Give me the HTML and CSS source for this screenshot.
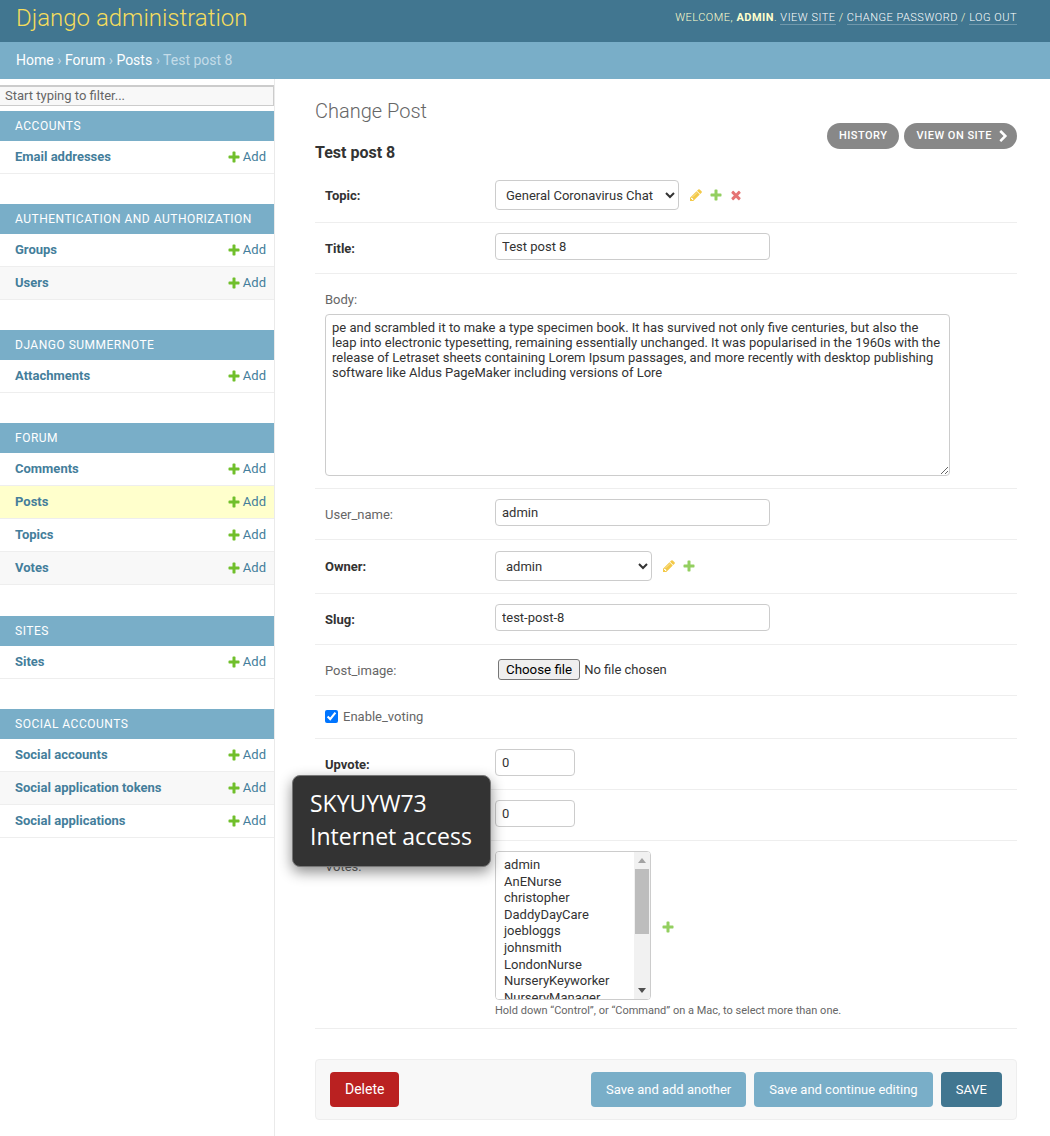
FILE: index.html
```html
<!DOCTYPE html>
<html lang="en">
<head>
<meta charset="utf-8">
<title>Change Post | Django site admin</title>
<link rel="stylesheet" href="styles.css">
</head>
<body>
<svg class="sprite" aria-hidden="true">
  <symbol id="i-add" viewBox="0 0 1792 1792"><path d="M1600 796v192q0 40-28 68t-68 28h-416v416q0 40-28 68t-68 28h-192q-40 0-68-28t-28-68v-416h-416q-40 0-68-28t-28-68v-192q0-40 28-68t68-28h416v-416q0-40 28-68t68-28h192q40 0 68 28t28 68v416h416q40 0 68 28t28 68z"/></symbol>
  <symbol id="i-change" viewBox="0 0 1792 1792"><path d="M491 1536l91-91-235-235-91 91v107h128v128h107zm523-928q0-22-22-22-10 0-17 7l-542 542q-7 7-7 17 0 22 22 22 10 0 17-7l542-542q7-7 7-17zm-54-192l416 416-832 832h-416v-416zm683 96q0 53-37 90l-166 166-416-416 166-165q36-38 90-38 53 0 91 38l235 234q37 39 37 91z"/></symbol>
  <symbol id="i-del" viewBox="0 0 1792 1792"><path d="M1490 1322q0 40-28 68l-136 136q-28 28-68 28t-68-28l-294-294-294 294q-28 28-68 28t-68-28l-136-136q-28-28-28-68t28-68l294-294-294-294q-28-28-28-68t28-68l136-136q28-28 68-28t68 28l294 294 294-294q28-28 68-28t68 28l136 136q28 28 28 68t-28 68l-294 294 294 294q28 28 28 68z"/></symbol>
  <symbol id="i-arrow" viewBox="0 0 1792 1792"><path d="M1363 877l-742 742q-19 19-45 19t-45-19l-166-166q-19-19-19-45t19-45l531-531-531-531q-19-19-19-45t19-45l166-166q19-19 45-19t45 19l742 742q19 19 19 45t-19 45z"/></symbol>
</svg>

<header class="header">
  <div class="brand">Django administration</div>
  <div class="user-tools">Welcome, <strong>admin</strong>. <a href="#">View site</a> / <a href="#">Change password</a> / <a href="#">Log out</a></div>
</header>
<nav class="breadcrumbs"><a href="#">Home</a> <span class="sep">›</span> <a href="#">Forum</a> <span class="sep">›</span> <a href="#">Posts</a> <span class="sep">›</span> Test post 8</nav>

<div class="layout">
  <aside class="sidebar">
    <input class="nav-filter" type="text" placeholder="Start typing to filter...">
    <section class="module">
      <h2 class="caption">Accounts</h2>
      <div class="mrow"><a class="mname" href="#">Email addresses</a><a class="madd" href="#"><svg class="ic ic-add"><use href="#i-add"/></svg>Add</a></div>
    </section>
    <section class="module">
      <h2 class="caption">Authentication and Authorization</h2>
      <div class="mrow"><a class="mname" href="#">Groups</a><a class="madd" href="#"><svg class="ic ic-add"><use href="#i-add"/></svg>Add</a></div>
      <div class="mrow"><a class="mname" href="#">Users</a><a class="madd" href="#"><svg class="ic ic-add"><use href="#i-add"/></svg>Add</a></div>
    </section>
    <section class="module">
      <h2 class="caption">Django Summernote</h2>
      <div class="mrow"><a class="mname" href="#">Attachments</a><a class="madd" href="#"><svg class="ic ic-add"><use href="#i-add"/></svg>Add</a></div>
    </section>
    <section class="module module-tall">
      <h2 class="caption">Forum</h2>
      <div class="mrow"><a class="mname" href="#">Comments</a><a class="madd" href="#"><svg class="ic ic-add"><use href="#i-add"/></svg>Add</a></div>
      <div class="mrow current"><a class="mname" href="#">Posts</a><a class="madd" href="#"><svg class="ic ic-add"><use href="#i-add"/></svg>Add</a></div>
      <div class="mrow"><a class="mname" href="#">Topics</a><a class="madd" href="#"><svg class="ic ic-add"><use href="#i-add"/></svg>Add</a></div>
      <div class="mrow"><a class="mname" href="#">Votes</a><a class="madd" href="#"><svg class="ic ic-add"><use href="#i-add"/></svg>Add</a></div>
    </section>
    <section class="module">
      <h2 class="caption">Sites</h2>
      <div class="mrow"><a class="mname" href="#">Sites</a><a class="madd" href="#"><svg class="ic ic-add"><use href="#i-add"/></svg>Add</a></div>
    </section>
    <section class="module">
      <h2 class="caption">Social Accounts</h2>
      <div class="mrow"><a class="mname" href="#">Social accounts</a><a class="madd" href="#"><svg class="ic ic-add"><use href="#i-add"/></svg>Add</a></div>
      <div class="mrow"><a class="mname" href="#">Social application tokens</a><a class="madd" href="#"><svg class="ic ic-add"><use href="#i-add"/></svg>Add</a></div>
      <div class="mrow"><a class="mname" href="#">Social applications</a><a class="madd" href="#"><svg class="ic ic-add"><use href="#i-add"/></svg>Add</a></div>
    </section>
  </aside>

  <main class="content">
    <div class="content-head">
      <div>
        <h1 class="page-title">Change Post</h1>
        <h2 class="object-title">Test post 8</h2>
      </div>
      <div class="object-tools">
        <a class="tool" href="#">History</a>
        <a class="tool" href="#">View on site<svg class="tool-arrow"><use href="#i-arrow"/></svg></a>
      </div>
    </div>

    <form class="change-form">
      <div class="form-row row-topic">
        <label class="lbl req">Topic:</label>
        <select class="sel sel-topic"><option>General Coronavirus Chat</option></select>
        <a class="rel first" href="#"><svg class="ic-rel ic-change"><use href="#i-change"/></svg></a>
        <a class="rel" href="#"><svg class="ic-rel ic-add"><use href="#i-add"/></svg></a>
        <a class="rel" href="#"><svg class="ic-rel ic-del"><use href="#i-del"/></svg></a>
      </div>
      <div class="form-row">
        <label class="lbl req">Title:</label>
        <input class="txt" type="text" value="Test post 8">
      </div>
      <div class="form-row row-body">
        <label class="lbl lbl-stack">Body:</label>
        <textarea class="area">pe and scrambled it to make a type specimen book. It has survived not only five centuries, but also the leap into electronic typesetting, remaining essentially unchanged. It was popularised in the 1960s with the release of Letraset sheets containing Lorem Ipsum passages, and more recently with desktop publishing software like Aldus PageMaker including versions of Lore</textarea>
      </div>
      <div class="form-row">
        <label class="lbl">User_name:</label>
        <input class="txt" type="text" value="admin">
      </div>
      <div class="form-row row-owner">
        <label class="lbl req">Owner:</label>
        <select class="sel sel-owner"><option>admin</option></select>
        <a class="rel first" href="#"><svg class="ic-rel ic-change"><use href="#i-change"/></svg></a>
        <a class="rel" href="#"><svg class="ic-rel ic-add"><use href="#i-add"/></svg></a>
      </div>
      <div class="form-row">
        <label class="lbl req">Slug:</label>
        <input class="txt" type="text" value="test-post-8">
      </div>
      <div class="form-row">
        <label class="lbl">Post_image:</label>
        <div class="file-field"><button class="file-btn" type="button">Choose file</button><span class="file-name">No file chosen</span></div>
      </div>
      <div class="form-row row-check">
        <input class="chk" type="checkbox" checked>
        <label class="lbl-check">Enable_voting</label>
      </div>
      <div class="form-row">
        <label class="lbl req">Upvote:</label>
        <input class="txt num" type="text" value="0">
      </div>
      <div class="form-row">
        <label class="lbl req">Downvote:</label>
        <input class="txt num" type="text" value="0">
      </div>
      <div class="form-row row-votes">
        <label class="lbl">Votes:</label>
        <div class="votes-field">
          <div class="votes-line">
            <div class="multi-wrap">
              <select class="multi" multiple>
                <option>admin</option>
                <option>AnENurse</option>
                <option>christopher</option>
                <option>DaddyDayCare</option>
                <option>joebloggs</option>
                <option>johnsmith</option>
                <option>LondonNurse</option>
                <option>NurseryKeyworker</option>
                <option>NurseryManager</option>
                <option>NurseryNurse</option>
                <option>Parent</option>
                <option>Teacher</option>
                <option>TestUser</option>
                <option>TestUser2</option>
                <option>TestUser3</option>
              </select>
              <div class="scrollbar" aria-hidden="true">
                <span class="sb-btn"><span class="sb-up"></span></span>
                <span class="sb-thumb"></span>
                <span class="sb-spacer"></span>
                <span class="sb-btn"><span class="sb-down"></span></span>
              </div>
            </div>
            <a class="rel first rel-votes" href="#"><svg class="ic-rel ic-add"><use href="#i-add"/></svg></a>
          </div>
          <p class="help">Hold down “Control”, or “Command” on a Mac, to select more than one.</p>
        </div>
      </div>

      <div class="submit-row">
        <a class="btn btn-del" href="#">Delete</a>
        <div class="submit-right">
          <a class="btn btn-sec" href="#">Save and add another</a>
          <a class="btn btn-sec" href="#">Save and continue editing</a>
          <a class="btn btn-save" href="#">SAVE</a>
        </div>
      </div>
    </form>
  </main>
</div>

<div class="net-tooltip">SKYUYW73<br>Internet access</div>
</body>
</html>
```

FILE: styles.css
```css
* { box-sizing: border-box; }
html, body { margin: 0; padding: 0; }
body {
  font-family: Roboto, "Liberation Sans", sans-serif;
  font-size: 14px;
  color: #333;
  background: #fff;
  height: 1136px;
  overflow: hidden;
  position: relative;
}
a { text-decoration: none; }
.sprite { display: none; }

.header {
  height: 42px;
  background: #417690;
  display: flex;
  justify-content: space-between;
  align-items: center;
  padding: 0 33px 0 16px;
}
.brand {
  font-size: 24px;
  font-weight: 300;
  color: #f5dd5d;
  position: relative;
  top: -3px;
}
.user-tools {
  font-size: 11px;
  font-weight: 300;
  letter-spacing: 0.5px;
  text-transform: uppercase;
  color: #ffc;
  position: relative;
  top: -4px;
}
.user-tools strong { font-weight: 700; }
.user-tools a { color: #fff; border-bottom: 1px solid rgba(255,255,255,0.25); }

.breadcrumbs {
  height: 37px;
  background: #79aec8;
  color: #c4dce8;
  font-size: 14px;
  padding: 10px 16px;
  line-height: 17px;
}
.breadcrumbs a { color: #fff; }

.layout { display: flex; height: 1057px; }

.sidebar {
  width: 275px;
  flex: none;
  border-right: 1px solid #eaeaea;
  padding-top: 6px;
}
.nav-filter {
  display: block;
  width: 100%;
  height: 21px;
  margin: 0 0 5px;
  padding: 1px 5px 3px;
  font: 13px Roboto, sans-serif;
  color: #333;
  background: #f8f8f8;
  border-style: solid;
  border-color: #ccc;
  border-width: 2px 1px 1px 0;
}
.nav-filter::placeholder { color: #666; opacity: 1; }

.module { margin-bottom: 30px; }
.module-tall { margin-bottom: 31px; }
.caption {
  margin: 0;
  height: 30px;
  line-height: 30px;
  padding: 0 15px;
  background: #79aec8;
  color: #fff;
  font-size: 12px;
  font-weight: 400;
  letter-spacing: 0.5px;
  text-transform: uppercase;
}
.mrow {
  height: 33px;
  display: flex;
  justify-content: space-between;
  align-items: center;
  padding: 0 8px 1px 15px;
  border-bottom: 1px solid #eee;
  font-size: 13px;
}
.mrow:nth-child(odd) { background: #f8f8f8; }
.mrow.current { background: #ffc; }
.mname { color: #447e9b; font-weight: 700; }
.madd { color: #447e9b; display: flex; align-items: center; }
.ic { width: 14px; height: 14px; margin-right: 2px; }
.ic-add { fill: #70bf2b; }
.ic-change { fill: #efb80b; }
.ic-del { fill: #dd4646; }

.content { flex: 1; min-width: 0; padding: 20px 33px 0 40px; }
.content-head {
  height: 71px;
  display: flex;
  justify-content: space-between;
  align-items: flex-start;
}
.page-title {
  margin: 0;
  font-size: 20px;
  line-height: 24px;
  font-weight: 300;
  color: #666;
}
.object-title {
  margin: 20px 0 0;
  font-size: 16px;
  line-height: 20px;
  font-weight: 700;
  color: #333;
}
.object-tools { display: flex; gap: 5px; margin-top: 24px; }
.tool {
  display: flex;
  align-items: center;
  height: 26px;
  padding: 0 12px 1px;
  border-radius: 15px;
  background: #888;
  color: #fff;
  font-size: 11px;
  font-weight: 500;
  letter-spacing: 0.5px;
  text-transform: uppercase;
}
.tool-arrow { width: 13px; height: 13px; fill: #fff; margin: 1px -5px 0 5px; }

.form-row {
  display: flex;
  align-items: flex-start;
  padding: 10px;
  border-bottom: 1px solid #eee;
  min-height: 51px;
  font-size: 13px;
}
.lbl {
  width: 170px;
  flex: none;
  color: #666;
  line-height: 17px;
  padding-top: 7px;
}
.lbl.req { color: #333; font-weight: 700; }
.txt, .area, .sel, .multi {
  font: 13px Roboto, sans-serif;
  color: #333;
  background: #fff;
  border: 1px solid #ccc;
  border-radius: 4px;
}
.txt { width: 275px; height: 27px; padding: 5px 6px; }
.txt.num { width: 80px; }
.sel { height: 30px; padding: 0 6px; }
.sel-topic { width: 184px; }
.sel-owner { width: 157px; }
.row-topic { min-height: 53px; }
.row-owner { min-height: 54px; padding-top: 11px; }
.rel { display: inline-flex; align-items: center; height: 30px; margin-left: 6px; }
.rel.first { margin-left: 9.5px; }
.rel-votes { margin-top: 3px; }
.ic-rel { width: 14px; height: 14px; opacity: 0.75; }
.row-body { display: block; min-height: 215px; padding-top: 17px; }
.lbl-stack { display: block; padding: 0; margin-bottom: 6px; }
.area {
  display: block;
  width: 625px;
  height: 162px;
  padding: 5px 6px;
  line-height: 15px;
  resize: vertical;
  overflow: hidden;
}
.file-field { display: flex; align-items: center; gap: 4px; padding: 4px 3px; height: 29px; }
.file-btn {
  height: 21px;
  padding: 0 7px;
  font: 13.33px Roboto, sans-serif;
  color: #000;
  background: #efefef;
  border: 1px solid #767676;
  border-radius: 3px;
}
.file-name { font-size: 13px; color: #333; }
.row-check { min-height: 43px; align-items: center; padding-top: 9px; padding-bottom: 11px; }
.chk { width: 13px; height: 13px; margin: 0 5px 0 0; }
.lbl-check { color: #666; line-height: 17px; }
.votes-field { display: block; }
.votes-line { display: flex; align-items: center; }
.multi-wrap { position: relative; width: 156px; height: 149px; }
.multi {
  display: block;
  width: 156px;
  height: 149px;
  padding: 5px 6px;
}
.multi option { min-height: 16.6px; line-height: 16.6px; padding: 0 2px; }
.scrollbar {
  position: absolute;
  top: 1px;
  right: 1px;
  bottom: 1px;
  width: 16px;
  background: #f1f1f1;
  display: flex;
  flex-direction: column;
  border-radius: 0 3px 3px 0;
}
.sb-btn { height: 17px; flex: none; display: flex; align-items: center; justify-content: center; }
.sb-up, .sb-down { width: 0; height: 0; border-left: 4px solid transparent; border-right: 4px solid transparent; }
.sb-up { border-bottom: 5px solid #a3a3a3; }
.sb-down { border-top: 5px solid #505050; }
.sb-thumb { height: 65px; flex: none; margin: 0 1px; background: #bdbdbd; }
.sb-spacer { flex: 1; }
.help { margin: 4px 0 0; font-size: 11px; line-height: 14px; color: #666; }
.row-votes { min-height: 188px; }

.submit-row {
  margin-top: 30px;
  height: 61px;
  display: flex;
  justify-content: space-between;
  align-items: center;
  padding: 0 14px;
  background: #f8f8f8;
  border: 1px solid #eee;
  border-radius: 4px;
}
.submit-right { display: flex; gap: 8px; }
.btn {
  display: block;
  height: 35px;
  line-height: 35px;
  padding: 0 15px;
  border-radius: 4px;
  color: #fff;
  font-size: 13px;
}
.btn-del { background: #ba2121; font-size: 14px; }
.btn-sec { background: #79aec8; }
.btn-save { background: #417690; }

.net-tooltip {
  position: absolute;
  left: 292px;
  top: 775px;
  width: 199px;
  height: 92px;
  padding: 11px 17px;
  background: #333;
  border: 1px solid #777;
  border-radius: 8px;
  box-shadow: 0 5px 14px rgba(0,0,0,0.45);
  color: #fff;
  font-family: "Open Sans", sans-serif;
  font-size: 23px;
  line-height: 33px;
}
```
